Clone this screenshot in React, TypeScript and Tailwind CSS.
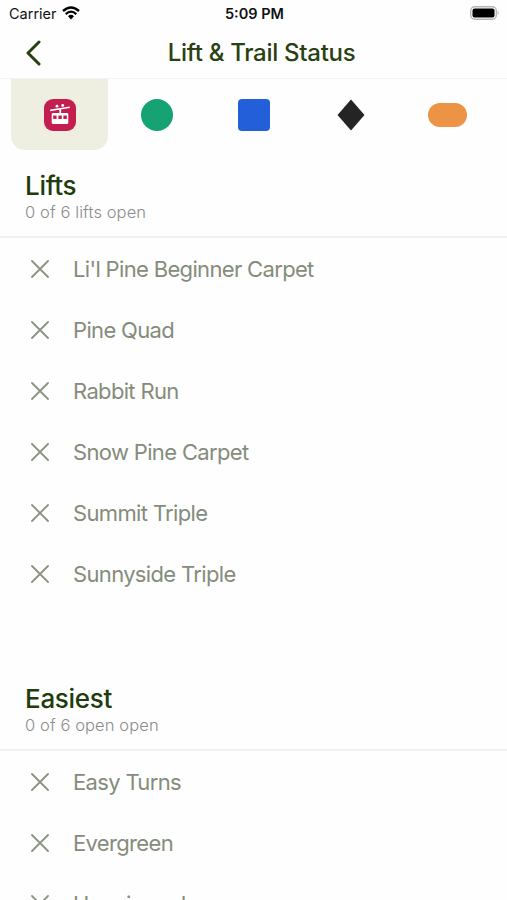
import { clsx } from 'clsx'

const SECTIONS = [
  {
    title: 'Lifts',
    summary: '0 of 6 lifts open',
    items: [
      "Li'l Pine Beginner Carpet",
      'Pine Quad',
      'Rabbit Run',
      'Snow Pine Carpet',
      'Summit Triple',
      'Sunnyside Triple',
    ],
  },
  {
    title: 'Easiest',
    summary: '0 of 6 open open',
    items: ['Easy Turns', 'Evergreen', 'Hooniwood'],
  },
]

const LiftIcon = () => (
  <svg viewBox="0 0 32 32" className="size-8">
    <rect width="32" height="32" rx="9" fill="#c41e50" />
    <g fill="#fff">
      <circle cx="13" cy="7.2" r="1.4" />
      <circle cx="18.7" cy="6.4" r="1.4" />
      <path d="M6.2 10.5 25.8 7.4v1.7L6.2 12.3z" />
      <path d="M15.4 10h1.7v5h-1.7z" />
      <path
        fillRule="evenodd"
        d="M9 14h14a1.3 1.3 0 0 1 1.3 1.3v8.2a1.5 1.5 0 0 1-1.5 1.5H9.2a1.5 1.5 0 0 1-1.5-1.5v-8.2A1.3 1.3 0 0 1 9 14zM9.2 16.6V20h3.4v-3.4zM14.4 16.6V20h3.4v-3.4zM19.4 16.6V20h3.4v-3.4z"
      />
    </g>
  </svg>
)

const TABS = [
  { id: 'lifts', icon: <LiftIcon /> },
  { id: 'easiest', icon: <div className="size-8 rounded-full bg-[#15a374]" /> },
  { id: 'more', icon: <div className="size-8 rounded-[4px] bg-[#235fd9]" /> },
  {
    id: 'most',
    icon: (
      <svg viewBox="0 0 28 32" className="h-8 w-7">
        <path d="M14 .5 27.5 16 14 31.5.5 16z" fill="#242424" />
      </svg>
    ),
  },
  { id: 'park', icon: <div className="h-6 w-[39px] rounded-full bg-[#ec9345]" /> },
]

const StatusBar = () => (
  <div className="grid h-[27px] shrink-0 grid-cols-3 items-center pl-[9px] pr-[7px] text-[#111]">
    <div className="flex items-center gap-[5px]">
      <span className="text-[14.5px]">Carrier</span>
      <svg viewBox="0 0 18 14" className="mb-px h-[14px] w-[18px]" fill="none" stroke="#000">
        <path d="M1 5Q9-2 17 5" strokeWidth="2.4" />
        <path d="M3.7 8.1Q9 3.3 14.3 8.1" strokeWidth="2.2" />
        <path d="M6 10.2Q9 7.5 12 10.2L9 13.4z" fill="#000" stroke="none" />
      </svg>
    </div>
    <span className="text-center text-[14.5px] font-semibold">5:09 PM</span>
    <svg viewBox="0 0 30 14" className="mb-px h-[14px] w-[30px] justify-self-end">
      <rect x=".7" y=".7" width="25.6" height="12.6" rx="4" fill="#fff" stroke="#b5b5b5" strokeWidth="1.4" />
      <rect x="2.5" y="2.5" width="22" height="9" rx="2" fill="#000" />
      <path d="M27.7 4.8q2 2.2 0 4.4z" fill="#b5b5b5" />
    </svg>
  </div>
)

const StatusRow = ({ name }: { name: string }) => (
  <li className="flex h-[61px] items-center gap-[24px] pl-[31px]">
    <svg viewBox="0 0 18 18" className="size-[18px] shrink-0">
      <path
        d="M1 1l16 16M17 1L1 17"
        stroke="#8b9281"
        strokeWidth="1.8"
        strokeLinecap="round"
      />
    </svg>
    <span className="whitespace-nowrap pt-px text-[22px] tracking-[-0.66px] text-[#858c7b]">
      {name}
    </span>
  </li>
)

export default function App() {
  return (
    <div className="flex h-[900px] w-[507px] flex-col overflow-hidden bg-[#fefefe] font-['Inter',sans-serif]">
      <StatusBar />
      <header className="grid h-[52px] shrink-0 grid-cols-[60px_1fr_60px] items-center border-b border-[#f3f3f3] pl-[16px]">
        <button type="button" aria-label="Back" className="pl-[9px]">
          <svg viewBox="0 0 16 26" className="h-[26px] w-4">
            <path
              d="M14 2 3 13l11 11"
              fill="none"
              stroke="#294012"
              strokeWidth="3"
              strokeLinecap="round"
              strokeLinejoin="round"
            />
          </svg>
        </button>
        <h1 className="whitespace-nowrap text-center text-[24px] font-medium tracking-[-0.28px] text-[#294012]">
          Lift &amp; Trail Status
        </h1>
      </header>

      <nav className="flex h-[71px] shrink-0 px-[11px]">
        {TABS.map((tab, index) => (
          <button
            key={tab.id}
            type="button"
            className={clsx(
              'flex flex-1 items-center justify-center rounded-b-[14px]',
              index === 0 && 'bg-[#eeeee1]'
            )}
          >
            {tab.icon}
          </button>
        ))}
      </nav>

      <main>
        {SECTIONS.map((section) => (
          <section key={section.title} className="pb-[59px]">
            <div className="h-[88px] border-b-2 border-[#f1f1f1] pl-[25px] pt-[20px]">
              <h2 className="text-[26px]/[32px] font-medium tracking-[-0.3px] text-[#213b0d]">
                {section.title}
              </h2>
              <p className="text-[16.5px]/[20px] font-light tracking-[0.1px] text-[#8c8c8c]">
                {section.summary}
              </p>
            </div>
            <ul>
              {section.items.map((name) => (
                <StatusRow key={name} name={name} />
              ))}
            </ul>
          </section>
        ))}
      </main>
    </div>
  )
}
